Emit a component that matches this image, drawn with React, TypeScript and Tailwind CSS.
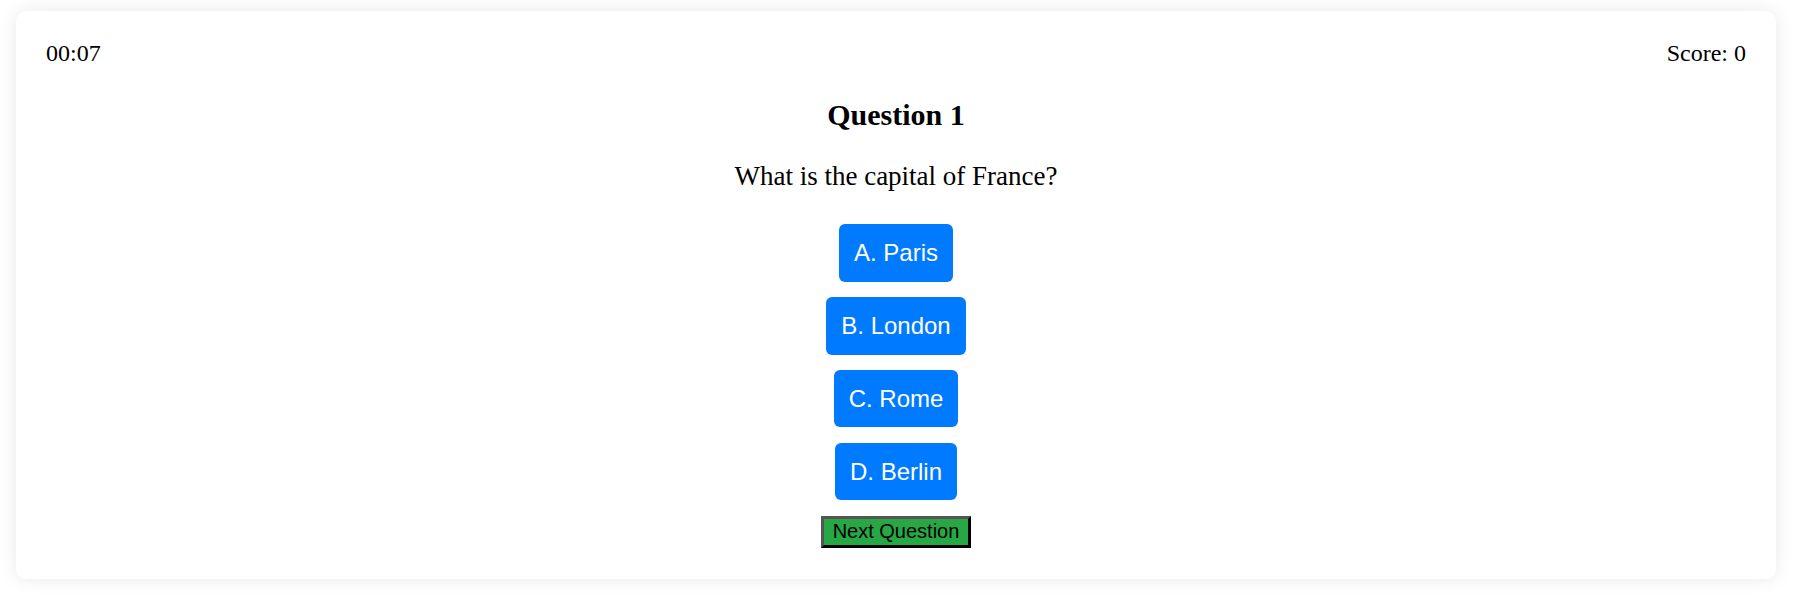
import React, { useState } from 'react'

const options = ['A. Paris', 'B. London', 'C. Rome', 'D. Berlin']

export default function App() {
  const [score] = useState(0)

  return (
    <div className="min-h-[597px] bg-white pt-[11px] pb-[20px] font-['Liberation_Serif',serif] text-black">
      <div className="ml-[16px] mr-[18px] rounded-[10px] bg-white px-[30px] pt-[29px] pb-[31px] shadow-[0_0_18px_rgba(0,0,0,0.09)]">
        <div className="flex items-center justify-between text-[24px] leading-[27.6px]">
          <span>00:07</span>
          <span>Score: {score}</span>
        </div>

        <h2 className="mt-[30px] text-center text-[30px] font-bold leading-[34.5px]">Question 1</h2>
        <p className="mt-[29px] text-center text-[27px] leading-[31px]">What is the capital of France?</p>

        <div className="mt-[32px] flex flex-col items-center gap-[15.3px] font-['Liberation_Sans',Arial,sans-serif]">
          {options.map((opt) => (
            <button
              key={opt}
              className="rounded-[6px] bg-[#007bff] px-[15px] py-[15px] text-[24px] leading-[27.6px] text-white"
            >
              {opt}
            </button>
          ))}
          <button className="border-[3px] border-solid border-t-[#555555] border-l-[#555555] border-r-black border-b-black bg-[#28a745] px-[9px] py-[1.5px] text-[20px] leading-[23px] text-black">
            Next Question
          </button>
        </div>
      </div>
    </div>
  )
}
